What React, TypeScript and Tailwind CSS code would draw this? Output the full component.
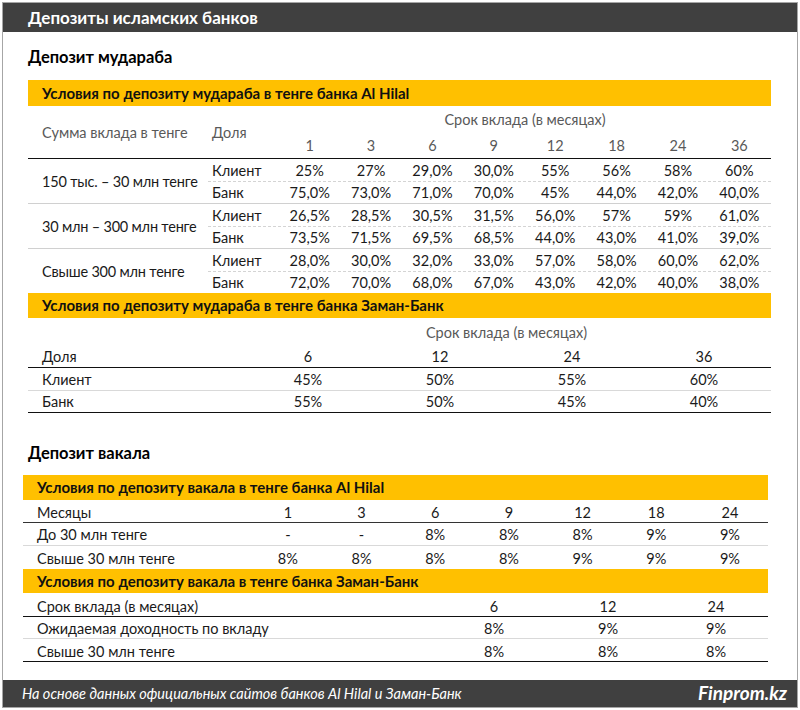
import React from "react";

const t1cols = ["1", "3", "6", "9", "12", "18", "24", "36"];
const t1groups = [
  {
    label: "150 тыс. – 30 млн тенге",
    client: ["25%", "27%", "29,0%", "30,0%", "55%", "56%", "58%", "60%"],
    bank: ["75,0%", "73,0%", "71,0%", "70,0%", "45%", "44,0%", "42,0%", "40,0%"],
  },
  {
    label: "30 млн – 300 млн тенге",
    client: ["26,5%", "28,5%", "30,5%", "31,5%", "56,0%", "57%", "59%", "61,0%"],
    bank: ["73,5%", "71,5%", "69,5%", "68,5%", "44,0%", "43,0%", "41,0%", "39,0%"],
  },
  {
    label: "Свыше 300 млн тенге",
    client: ["28,0%", "30,0%", "32,0%", "33,0%", "57,0%", "58,0%", "60,0%", "62,0%"],
    bank: ["72,0%", "70,0%", "68,0%", "67,0%", "43,0%", "42,0%", "40,0%", "38,0%"],
  },
];

function Cells({ vals, w }: { vals: string[]; w: string }) {
  return (
    <>
      {vals.map((v, i) => (
        <div key={i} className={`${w} shrink-0 text-center`}>
          {v}
        </div>
      ))}
    </>
  );
}

export default function App() {
  return (
    <div className="w-[800px] h-[710px] bg-white font-['Lato',sans-serif] text-[14.5px] text-[#1a1a1a]">
      <div className="ml-[2px] mt-[2px] w-[796px] h-[706px] border border-[#a6a6a6] flex flex-col">
        {/* header */}
        <div className="h-[29px] shrink-0 bg-[#404040] flex items-center pl-[25px] text-white font-bold text-[17px]">
          Депозиты исламских банков
        </div>

        {/* Section 1 */}
        <div className="pl-[25px] pr-[26px]">
          <div className="mt-[13px] h-[24px] flex items-center font-bold text-[16.5px] text-black">
            Депозит мудараба
          </div>
          <div className="mt-[11px] h-[26px] bg-[#ffc000] flex items-center pl-[14px] text-[15px] font-bold text-[#111]">
            Условия по депозиту мудараба в тенге банка Al Hilal
          </div>
          {/* table 1 header */}
          <div className="flex border-b border-[#111] text-[#595959]">
            <div className="w-[180px] shrink-0 flex items-center pl-[14px] pt-[2px]">Сумма вклада в тенге</div>
            <div className="w-[71px] shrink-0 flex items-center pl-[4px] pt-[2px]">Доля</div>
            <div className="flex-1 flex flex-col">
              <div className="h-[27px] flex items-center justify-center pt-[1px]">Срок вклада (в месяцах)</div>
              <div className="h-[25px] flex items-center pt-[1px]">
                <Cells vals={t1cols} w="w-[61.375px]" />
              </div>
            </div>
          </div>
          {/* table 1 body */}
          {t1groups.map((g, gi) => (
            <div key={gi} className={`flex ${gi < 2 ? "border-b border-[#d0d0d0]" : ""}`}>
              <div className="w-[180px] shrink-0 flex items-center pl-[14px] pt-[1px] tracking-[-0.2px]">{g.label}</div>
              <div className="flex-1 flex flex-col">
                <div className="h-[23px] flex items-center pt-[1px] border-b border-dashed border-[#d4d4d4]">
                  <div className="w-[71px] shrink-0 pl-[4px]">Клиент</div>
                  <Cells vals={g.client} w="w-[61.375px]" />
                </div>
                <div className="h-[21px] flex items-center pt-[1px]">
                  <div className="w-[71px] shrink-0 pl-[4px]">Банк</div>
                  <Cells vals={g.bank} w="w-[61.375px]" />
                </div>
              </div>
            </div>
          ))}
          <div className="h-[25px] bg-[#ffc000] flex items-center pl-[14px] text-[15px] font-bold text-[#111]">
            Условия по депозиту мудараба в тенге банка Заман-Банк
          </div>
          {/* table 2 */}
          <div className="h-[28px] flex items-center pt-[1px]">
            <div className="w-[214px] shrink-0"></div>
            <div className="flex-1 text-center text-[#595959]">Срок вклада (в месяцах)</div>
          </div>
          <div className="h-[22px] flex items-center pt-[1px] border-b border-[#111]">
            <div className="w-[214px] shrink-0 pl-[14px]">Доля</div>
            <Cells vals={["6", "12", "24", "36"]} w="w-[132px]" />
          </div>
          <div className="h-[23px] flex items-center pt-[2px] border-b border-[#d9d9d9]">
            <div className="w-[214px] shrink-0 pl-[14px]">Клиент</div>
            <Cells vals={["45%", "50%", "55%", "60%"]} w="w-[132px]" />
          </div>
          <div className="h-[22px] flex items-center pt-[1px] border-b border-[#111]">
            <div className="w-[214px] shrink-0 pl-[14px]">Банк</div>
            <Cells vals={["55%", "50%", "45%", "40%"]} w="w-[132px]" />
          </div>
        </div>

        {/* Section 2 */}
        <div className="pl-[20px] pr-[29px]">
          <div className="mt-[28px] ml-[5px] h-[24px] flex items-center font-bold text-[16.5px] text-black">
            Депозит вакала
          </div>
          <div className="mt-[10px] h-[25px] bg-[#ffc000] flex items-center pl-[14px] text-[15px] font-bold text-[#111]">
            Условия по депозиту вакала в тенге банка Al Hilal
          </div>
          <div className="h-[23px] flex items-center pt-[4px] border-b border-[#333]">
            <div className="w-[228px] shrink-0 pl-[14px]">Месяцы</div>
            <Cells vals={["1", "3", "6", "9", "12", "18", "24"]} w="w-[73.7px]" />
          </div>
          <div className="h-[23px] flex items-center pt-[2px] border-b border-[#d9d9d9]">
            <div className="w-[228px] shrink-0 pl-[14px]">До 30 млн тенге</div>
            <Cells vals={["-", "-", "8%", "8%", "8%", "9%", "9%"]} w="w-[73.7px]" />
          </div>
          <div className="h-[23px] flex items-center pt-[2px]">
            <div className="w-[228px] shrink-0 pl-[14px]">Свыше 30 млн тенге</div>
            <Cells vals={["8%", "8%", "8%", "8%", "9%", "9%", "9%"]} w="w-[73.7px]" />
          </div>
          <div className="h-[24px] bg-[#ffc000] flex items-center pl-[14px] text-[15px] font-bold text-[#111]">
            Условия по депозиту вакала в тенге банка Заман-Банк
          </div>
          <div className="h-[24px] flex items-center pt-[4px] border-b border-[#111]">
            <div className="w-[414px] shrink-0 pl-[14px]">Срок вклада (в месяцах)</div>
            <Cells vals={["6", "12"]} w="w-[114px]" />
            <div className="w-[102px] shrink-0 text-center">24</div>
          </div>
          <div className="h-[22px] flex items-center pt-[3px] border-b border-[#d9d9d9]">
            <div className="w-[414px] shrink-0 pl-[14px]">Ожидаемая доходность по вкладу</div>
            <Cells vals={["8%", "9%"]} w="w-[114px]" />
            <div className="w-[102px] shrink-0 text-center">9%</div>
          </div>
          <div className="h-[23px] flex items-center pt-[3px] border-b border-[#111]">
            <div className="w-[414px] shrink-0 pl-[14px]">Свыше 30 млн тенге</div>
            <Cells vals={["8%", "8%"]} w="w-[114px]" />
            <div className="w-[102px] shrink-0 text-center">8%</div>
          </div>
        </div>

        <div className="flex-1"></div>
        {/* footer */}
        <div className="h-[27px] shrink-0 bg-[#404040] flex items-center justify-between pl-[19px] pr-[10px] text-white">
          <span className="italic text-[14.5px]">
            На основе данных официальных сайтов банков Al Hilal и Заман-Банк
          </span>
          <span className="italic font-bold text-[19px]">Finprom.kz</span>
        </div>
      </div>
    </div>
  );
}
